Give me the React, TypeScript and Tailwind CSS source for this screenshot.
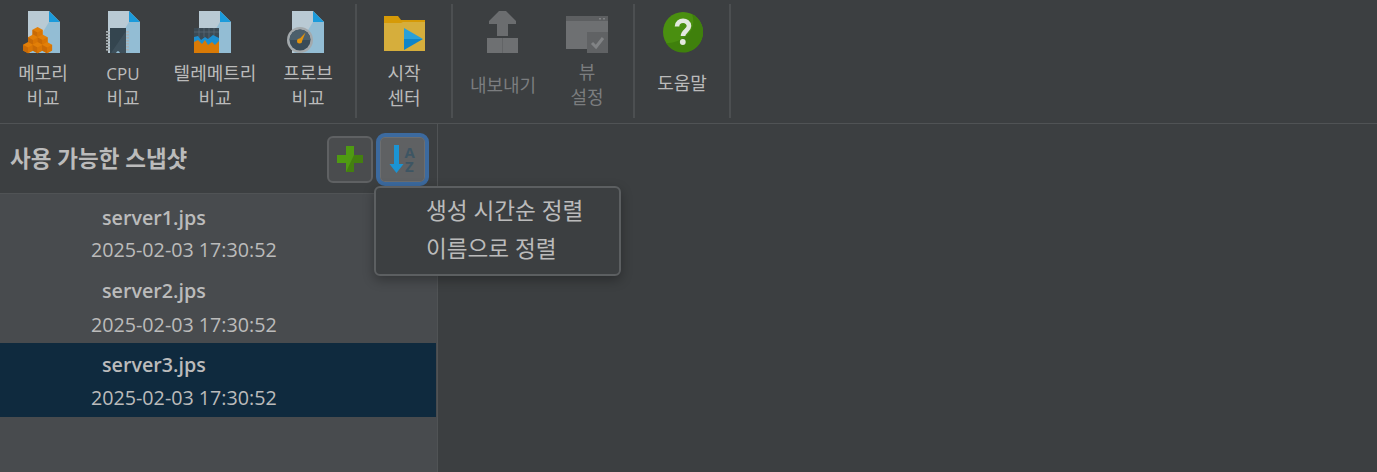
import React from "react";

const FONT = { fontFamily: '"Open Sans","Noto Sans CJK KR",sans-serif' };

function FileBase({ x = 0 }: { x?: number }) {
  return (
    <g transform={`translate(${x} 0)`}>
      <path d="M0 0H21L32 11V42H0Z" fill="#b9cad4" />
      <path d="M21 11H32V42H2Z" fill="#93bdd4" />
      <path d="M21 0L32 11H21Z" fill="#1b9bdb" />
    </g>
  );
}

function Cube({ x, y }: { x: number; y: number }) {
  return (
    <g transform={`translate(${x} ${y}) scale(1.12)`}>
      <path d="M0 2.5L4.5 0L9 2.5V7.5L4.5 10L0 7.5Z" fill="#e27f08" />
      <path d="M0 2.5L4.5 5V10L0 7.5Z" fill="#c96a05" />
      <path d="M9 2.5L4.5 5V10L9 7.5Z" fill="#d97504" />
    </g>
  );
}

function MemoryIcon() {
  return (
    <svg width="40" height="44" viewBox="0 0 40 44" className="block">
      <FileBase x={5} />
      <Cube x={9.5} y={16} />
      <Cube x={5} y={23.5} />
      <Cube x={14.5} y={23.5} />
      <Cube x={0} y={31} />
      <Cube x={9.5} y={31} />
      <Cube x={19} y={31} />
    </svg>
  );
}

function CpuIcon() {
  const ys = [20, 23, 26, 29, 32, 35, 38];
  return (
    <svg width="36" height="44" viewBox="0 0 36 44" className="block">
      <FileBase x={2} />
      {ys.map((y) => (
        <g key={y}>
          <rect x="0" y={y} width="4" height="1.6" fill="#a9b0b3" />
          <rect x="20" y={y} width="3" height="1.6" fill="#a9b0b3" />
        </g>
      ))}
      <path d="M4 17H20V42H14A2 2 0 0 0 10 42H4Z" fill="#34454f" />
      <path d="M5 42L20 20V42H14A2 2 0 0 0 10 42Z" fill="#3e505b" />
    </svg>
  );
}

function TelemetryIcon() {
  return (
    <svg width="40" height="44" viewBox="0 0 40 44" className="block">
      <FileBase x={5} />
      <rect x="0" y="17" width="25" height="25" fill="#3b4a54" />
      <path d="M5 17V28M10 17V26M15 17V28M20 17V26M0 21H25" stroke="#586873" strokeWidth="0.8" />
      <path d="M0 26L4 25L7 29L11 26L14 28L19 24L25 27V42H0Z" fill="#1c8fd0" />
      <path d="M0 31L4 29L8 33L11 29L14 34L18 31L21 34L25 30V42H0Z" fill="#d97a06" />
    </svg>
  );
}

function ProbeIcon() {
  return (
    <svg width="40" height="44" viewBox="0 0 40 44" className="block">
      <FileBase x={5} />
      <circle cx="13" cy="29" r="13" fill="#a3a9ac" />
      <circle cx="13" cy="29" r="10.5" fill="#3a4b57" />
      <path d="M2.5 29A10.5 10.5 0 0 1 23.5 29Z" fill="#4c5f6b" />
      <path d="M11 29.5L18.5 21.5L14.5 31.5Z" fill="#e0920e" />
      <circle cx="12.5" cy="30" r="2.5" fill="#e0920e" />
    </svg>
  );
}

function FolderIcon() {
  return (
    <svg width="42" height="36" viewBox="0 0 42 36" className="block">
      <path d="M0 0H14L17 4H41V35H0Z" fill="#d69a07" />
      <path d="M0 7H17L19 6H41V35H0Z" fill="#d6ae3c" />
      <path d="M20 12L39 23L20 23Z" fill="#2ba0d8" />
      <path d="M20 23H39L20 34Z" fill="#0f85c9" />
    </svg>
  );
}

function ExportIcon() {
  return (
    <svg width="32" height="44" viewBox="0 0 32 44" className="block">
      <path d="M12 0H19L29 10V13H21V25H10V13H2V10Z" fill="#6b6d6f" />
      <rect x="0" y="27" width="31" height="15" fill="#6e7072" />
      <rect x="15" y="27" width="1" height="15" fill="#626466" />
    </svg>
  );
}

function ViewIcon() {
  return (
    <svg width="43" height="38" viewBox="0 0 43 38" className="block">
      <rect x="0" y="0" width="42" height="33" fill="#6e7072" />
      <rect x="0" y="0" width="42" height="5" fill="#5d5f61" />
      <rect x="33" y="2" width="2" height="1.5" fill="#808284" />
      <rect x="37" y="2" width="2" height="1.5" fill="#808284" />
      <rect x="21" y="16" width="21" height="21" fill="#606264" />
      <path d="M26 27L30 31L37 22" fill="none" stroke="#818385" strokeWidth="3" />
    </svg>
  );
}

function HelpIcon() {
  return (
    <svg width="42" height="42" viewBox="0 0 42 42" className="block">
      <circle cx="21" cy="21" r="20" fill="#4a8f10" />
      <path d="M4 32A20 20 0 0 0 41 21A20 20 0 0 0 30 3C36 20 20 32 4 32Z" fill="#3f800c" />
      <path d="M15 15.5C15 8 27 8 27 15C27 19.5 21 20 21 25" fill="none" stroke="#e4e8df" strokeWidth="4.6" />
      <circle cx="20.8" cy="31" r="2.9" fill="#e4e8df" />
    </svg>
  );
}

function ToolButton({
  w,
  icon,
  lines,
  disabled,
  iconTop,
  textTop,
}: {
  w: string;
  icon: React.ReactNode;
  lines: string[];
  disabled?: boolean;
  iconTop: string;
  textTop: string;
}) {
  return (
    <div className={`${w} h-full flex flex-col items-center shrink-0`}>
      <div className={`${iconTop} flex justify-center`}>{icon}</div>
      <div className={`${textTop} text-center text-lg leading-[25px] ${disabled ? "text-[#7b7d7f]" : "text-[#bbbbbb]"}`}>
        {lines.map((l) => (
          <div key={l} className={`whitespace-nowrap ${l === "CPU" ? "text-[17px]" : ""}`}>{l}</div>
        ))}
      </div>
    </div>
  );
}

function Sep({ cls = "" }: { cls?: string }) {
  return <div className={`w-[2px] h-[114px] mt-1 bg-[#4c4f51] shrink-0 ${cls}`} />;
}

function SnapshotRow({
  name,
  selected,
  nameTop,
  dateTop,
}: {
  name: string;
  selected?: boolean;
  nameTop: string;
  dateTop: string;
}) {
  return (
    <div className={`h-[74px] flex flex-col ${selected ? "bg-[#0f2a3e]" : ""}`}>
      <div className={`pl-[102px] h-[37px] ${nameTop} text-[19.7px] leading-[26px] font-semibold text-[#bbbbbb]`}>{name}</div>
      <div className={`pl-[91px] h-[37px] ${dateTop} text-[19.7px] leading-[26px] text-[#bbbbbb]`}>2025-02-03 17:30:52</div>
    </div>
  );
}

export default function App() {
  return (
    <div style={FONT} className="w-[1377px] h-[472px] bg-[#3c3f41] flex flex-col overflow-hidden">
      <div className="h-[124px] shrink-0 flex border-b border-[#505355]">
        <ToolButton w="w-[86px]" iconTop="pt-[11px]" textTop="pt-[6px]" icon={<MemoryIcon />} lines={["메모리", "비교"]} />
        <ToolButton w="w-[74px]" iconTop="pt-[11px] pl-[2px]" textTop="pt-[6px]" icon={<CpuIcon />} lines={["CPU", "비교"]} />
        <ToolButton w="w-[110px]" iconTop="pt-[11px] pr-[2px]" textTop="pt-[6px]" icon={<TelemetryIcon />} lines={["텔레메트리", "비교"]} />
        <ToolButton w="w-[76px]" iconTop="pt-[11px] pr-[2px]" textTop="pt-[6px]" icon={<ProbeIcon />} lines={["프로브", "비교"]} />
        <Sep cls="ml-[9px]" />
        <ToolButton w="w-[94px]" iconTop="pt-[16px] pl-[2px]" textTop="pt-[9px]" icon={<FolderIcon />} lines={["시작", "센터"]} />
        <Sep />
        <ToolButton w="w-[100px]" iconTop="pt-[11px]" textTop="pt-[18px]" disabled icon={<ExportIcon />} lines={["내보내기"]} />
        <ToolButton w="w-[68px]" iconTop="pt-[16px]" textTop="pt-[6px]" disabled icon={<ViewIcon />} lines={["뷰", "설정"]} />
        <Sep cls="ml-[12px]" />
        <ToolButton w="w-[94px]" iconTop="pt-[11px] pl-[2px]" textTop="pt-[18px]" icon={<HelpIcon />} lines={["도움말"]} />
        <Sep />
      </div>
      <div className="flex-1 flex min-h-0">
        <div className="w-[438px] shrink-0 flex flex-col border-r border-[#505355] relative">
          <div className="h-[70px] shrink-0 flex items-center border-b border-[#505355] pl-[10px]">
            <div className="text-[22.5px] leading-[28px] font-semibold text-[#bbbbbb] whitespace-nowrap">사용 가능한 스냅샷</div>
            <div className="ml-auto flex items-center pr-[8px] mt-[1px]">
              <div className="w-[46px] h-[47px] rounded-[6px] border-2 border-[#5f6163] bg-[#4a4c4e] flex items-center justify-center">
                <svg width="26" height="26" viewBox="0 0 26 26" className="block">
                  <path d="M9 0H17V9H26V17H17V26H9V17H0V9H9Z" fill="#4f9a12" />
                  <path d="M17 9H26V17H17V26H9Z" fill="#447f10" />
                </svg>
              </div>
              <div className="ml-[3px] w-[53px] h-[53px] rounded-[9px] border-[4px] border-[#3c6a9f] bg-[#5f6163] shadow-[inset_0_0_0_1px_#6c6e70] flex items-center justify-center">
                <svg width="28" height="32" viewBox="0 0 28 32" className="block">
                  <path d="M5 2H10V21H14.5L7.5 30L0.5 21H5Z" fill="#1b94d4" />
                  <text fontSize="15" fontWeight="700" fill="#3d5563" fontFamily="Open Sans">
                    <tspan x="15.5" y="15">A</tspan>
                    <tspan x="16" y="29">Z</tspan>
                  </text>
                </svg>
              </div>
            </div>
          </div>
          <div className="flex-1 bg-[#484b4e] pr-[1px]">
            <div className="h-[1px]" />
            <SnapshotRow name="server1.jps" nameTop="pt-[10px]" dateTop="pt-[5px]" />
            <SnapshotRow name="server2.jps" nameTop="pt-[9px]" dateTop="pt-[6px]" />
            <SnapshotRow name="server3.jps" nameTop="pt-[9px]" dateTop="pt-[5px]" selected />
          </div>
          <div className="absolute left-[374px] top-[62px] w-[247px] h-[90px] rounded-[6px] border-2 border-[#5c5f61] bg-[#3c3f41] shadow-[0_4px_12px_rgba(0,0,0,0.3)] pl-[50px] pt-[4px] text-[22.6px] leading-[38px] text-[#bbbbbb] z-10">
            <div className="whitespace-nowrap">생성 시간순 정렬</div>
            <div className="whitespace-nowrap">이름으로 정렬</div>
          </div>
        </div>
        <div className="flex-1" />
      </div>
    </div>
  );
}
